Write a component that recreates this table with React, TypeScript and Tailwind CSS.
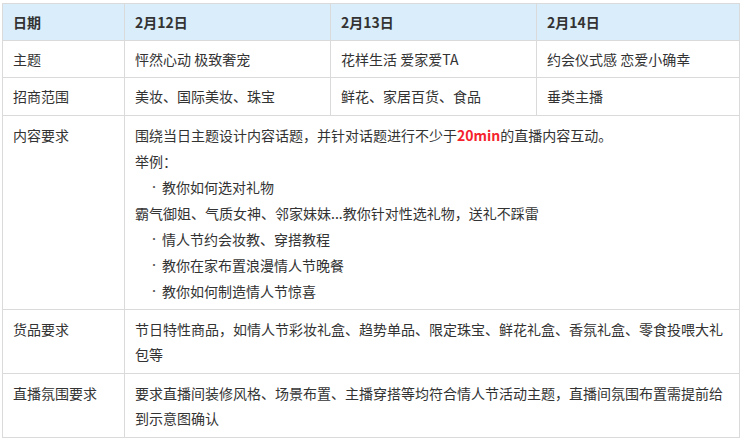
import React from "react";

const cell = "border border-[#dadada] px-[10px] pt-[6px] pb-[5px] align-top";

const Bullet = ({ children }: { children: React.ReactNode }) => (
  <div className="flex h-[26px] items-center pl-[14px]">
    <span className="w-[13px] text-[10px] leading-none text-[#555]">•</span>
    <span>{children}</span>
  </div>
);

export default function App() {
  return (
    <div
      className="bg-white w-[743px] h-[443px] pt-[3px] pl-[2px] text-[14px] leading-[25px] text-[#333]"
      style={{ fontFamily: '"Microsoft YaHei", "Noto Sans CJK SC", sans-serif' }}
    >
      <table className="border-collapse table-fixed w-[737px]">
        <colgroup>
          <col className="w-[122px]" />
          <col className="w-[206px]" />
          <col className="w-[206px]" />
          <col className="w-[203px]" />
        </colgroup>
        <thead>
          <tr className="bg-[#d9eefa] font-bold text-left">
            <th className={cell}>日期</th>
            <th className={cell}>2月12日</th>
            <th className={cell}>2月13日</th>
            <th className={cell}>2月14日</th>
          </tr>
        </thead>
        <tbody>
          <tr>
            <td className={cell}>主题</td>
            <td className={cell}>怦然心动 极致奢宠</td>
            <td className={cell}>花样生活 爱家爱TA</td>
            <td className={cell}>约会仪式感 恋爱小确幸</td>
          </tr>
          <tr>
            <td className={`${cell} pb-[6px]`}>招商范围</td>
            <td className={`${cell} pb-[6px]`}>美妆、国际美妆、珠宝</td>
            <td className={`${cell} pb-[6px]`}>鲜花、家居百货、食品</td>
            <td className={`${cell} pb-[6px]`}>垂类主播</td>
          </tr>
          <tr className="leading-[26px]">
            <td className={cell}>内容要求</td>
            <td className={cell} colSpan={3}>
              <div className="h-[26px]">
                围绕当日主题设计内容话题，并针对话题进行不少于
                <span className="font-bold text-[#f5222d]">20min</span>
                的直播内容互动。
              </div>
              <div className="h-[26px]">举例：</div>
              <Bullet>教你如何选对礼物</Bullet>
              <div className="h-[26px]">霸气御姐、气质女神、邻家妹妹...教你针对性选礼物，送礼不踩雷</div>
              <Bullet>情人节约会妆教、穿搭教程</Bullet>
              <Bullet>教你在家布置浪漫情人节晚餐</Bullet>
              <Bullet>教你如何制造情人节惊喜</Bullet>
            </td>
          </tr>
          <tr>
            <td className={`${cell} pt-[7px] pb-[6px]`}>货品要求</td>
            <td className={`${cell} pt-[7px] pb-[6px]`} colSpan={3}>
              节日特性商品，如情人节彩妆礼盒、趋势单品、限定珠宝、鲜花礼盒、香氛礼盒、零食投喂大礼
              <br />
              包等
            </td>
          </tr>
          <tr>
            <td className={`${cell} pt-[7px] pb-[6px]`}>直播氛围要求</td>
            <td className={`${cell} pt-[7px] pb-[6px]`} colSpan={3}>
              要求直播间装修风格、场景布置、主播穿搭等均符合情人节活动主题，直播间氛围布置需提前给
              <br />
              到示意图确认
            </td>
          </tr>
        </tbody>
      </table>
    </div>
  );
}
